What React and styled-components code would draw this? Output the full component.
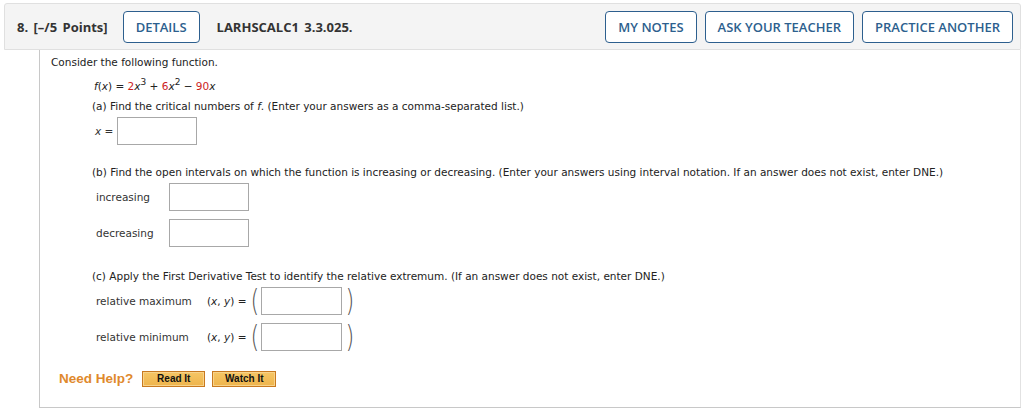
import React from 'react';
import styled, { createGlobalStyle } from 'styled-components';

const Global = createGlobalStyle`
  html, body { margin: 0; padding: 0; background: #fff; }
  body { font-family: "DejaVu Sans", Verdana, sans-serif; color: #222; }
`;

const Page = styled.div`
  padding: 3px 4px 0 4px;
  width: 1017px;
`;

const Header = styled.div`
  display: flex;
  align-items: center;
  height: 45px;
  border: 1px solid #e0e0e0;
  border-radius: 3px 3px 0 0;
  background: #f4f4f4;
  padding: 0 7px 0 12px;
  font-family: "Open Sans", sans-serif;
`;

const Title = styled.span`
  font-weight: 700;
  font-size: 13px;
  color: #333;
  margin-right: ${p => p.$gap || 0}px;
  word-spacing: 2px;
`;

const Spacer = styled.div`
  flex: 1;
`;

const OutlineBtn = styled.button`
  height: 32px;
  padding: 0 12px;
  margin-left: ${p => p.$ml || 0}px;
  margin-right: ${p => p.$mr || 0}px;
  border: 1.5px solid #2d5f8e;
  border-radius: 4px;
  background: #fff;
  color: #2d5f8e;
  font-family: "Open Sans", sans-serif;
  font-weight: 600;
  font-size: 13px;
  text-transform: uppercase;
`;

const Body = styled.div`
  margin-left: 35px;
  border-left: 1px solid #c8c8c8;
  border-right: 1px solid #e2e2e2;
  border-bottom: 1px solid #c8c8c8;
  height: 351px;
  padding: 6px 0 0 11px;
  font-size: 10.5px;
`;

const Line = styled.div`
  margin-left: ${p => p.$indent || 0}px;
  margin-top: ${p => p.$mt || 0}px;
  line-height: 13px;
`;

const Red = styled.span`
  color: #cc1d1d;
`;

const Sup = styled.sup`
  font-size: 9px;
`;

const I = styled.i`
  font-style: italic;
`;

const Row = styled.div`
  display: flex;
  align-items: center;
  margin-left: ${p => p.$indent || 0}px;
  margin-top: ${p => p.$mt || 0}px;
`;

const Label = styled.span`
  width: ${p => p.$w}px;
  color: #333;
`;

const Box = styled.div`
  width: ${p => p.$w || 78}px;
  height: 26px;
  border: 1px solid #a8a8a8;
  background: #fff;
`;

const Paren = styled.span`
  font-family: "DejaVu Sans", sans-serif;
  font-weight: 200;
  font-size: 30px;
  line-height: 28px;
  color: #555;
  transform: scaleX(0.75);
  margin: ${p => p.$m};
`;

const Help = styled.div`
  display: flex;
  align-items: center;
  margin: 20px 0 0 8px;
`;

const HelpText = styled.span`
  font-family: "Liberation Sans", Arial, sans-serif;
  font-weight: 700;
  font-size: 13.5px;
  color: #e0892c;
  margin-right: 9px;
`;

const HelpBtn = styled.button`
  width: ${p => p.$w}px;
  height: 16px;
  margin-right: 7px;
  padding: 0;
  border: 1px solid #c8791f;
  box-shadow: inset 0 0 0 1px #f8d38a;
  background: linear-gradient(#f6c665, #eeb44c);
  font-family: "Liberation Sans", Arial, sans-serif;
  font-weight: 700;
  font-size: 10px;
  color: #111;
`;

export default function App() {
  return (
    <Page>
      <Global />
      <Header>
        <Title $gap={15}>8. [–/5 Points]</Title>
        <OutlineBtn $mr={17}>Details</OutlineBtn>
        <Title>LARHSCALC1 3.3.025.</Title>
        <Spacer />
        <OutlineBtn>My Notes</OutlineBtn>
        <OutlineBtn $ml={8}>Ask Your Teacher</OutlineBtn>
        <OutlineBtn $ml={8}>Practice Another</OutlineBtn>
      </Header>
      <Body>
        <Line>Consider the following function.</Line>
        <Line $indent={43} $mt={7}>
          <I>f</I>(<I>x</I>) = <Red>2</Red><I>x</I><Sup>3</Sup> + <Red>6</Red><I>x</I><Sup>2</Sup> − <Red>90</Red><I>x</I>
        </Line>
        <Line $indent={41} $mt={7}>
          (a) Find the critical numbers of <I>f</I>. (Enter your answers as a comma-separated list.)
        </Line>
        <Row $indent={44} $mt={4}>
          <Label $w={22}><I>x</I> =</Label>
          <Box $w={78} />
        </Row>
        <Line $indent={41} $mt={21}>
          (b) Find the open intervals on which the function is increasing or decreasing. (Enter your answers using interval notation. If an answer does not exist, enter DNE.)
        </Line>
        <Row $indent={45} $mt={4}>
          <Label $w={73}>increasing</Label>
          <Box $w={78} />
        </Row>
        <Row $indent={45} $mt={8}>
          <Label $w={73}>decreasing</Label>
          <Box $w={78} />
        </Row>
        <Line $indent={41} $mt={23}>
          (c) Apply the First Derivative Test to identify the relative extremum. (If an answer does not exist, enter DNE.)
        </Line>
        <Row $indent={45} $mt={4}>
          <Label $w={111}>relative maximum</Label>
          <span>(<I>x</I>, <I>y</I>) =</span>
          <Paren $m="0 0 0 3px">(</Paren>
          <Box $w={79} />
          <Paren $m="0 0 0 2px">)</Paren>
        </Row>
        <Row $indent={45} $mt={8}>
          <Label $w={111}>relative minimum</Label>
          <span>(<I>x</I>, <I>y</I>) =</span>
          <Paren $m="0 0 0 3px">(</Paren>
          <Box $w={79} />
          <Paren $m="0 0 0 2px">)</Paren>
        </Row>
        <Help>
          <HelpText>Need Help?</HelpText>
          <HelpBtn $w={63}>Read It</HelpBtn>
          <HelpBtn $w={64}>Watch It</HelpBtn>
        </Help>
      </Body>
    </Page>
  );
}
